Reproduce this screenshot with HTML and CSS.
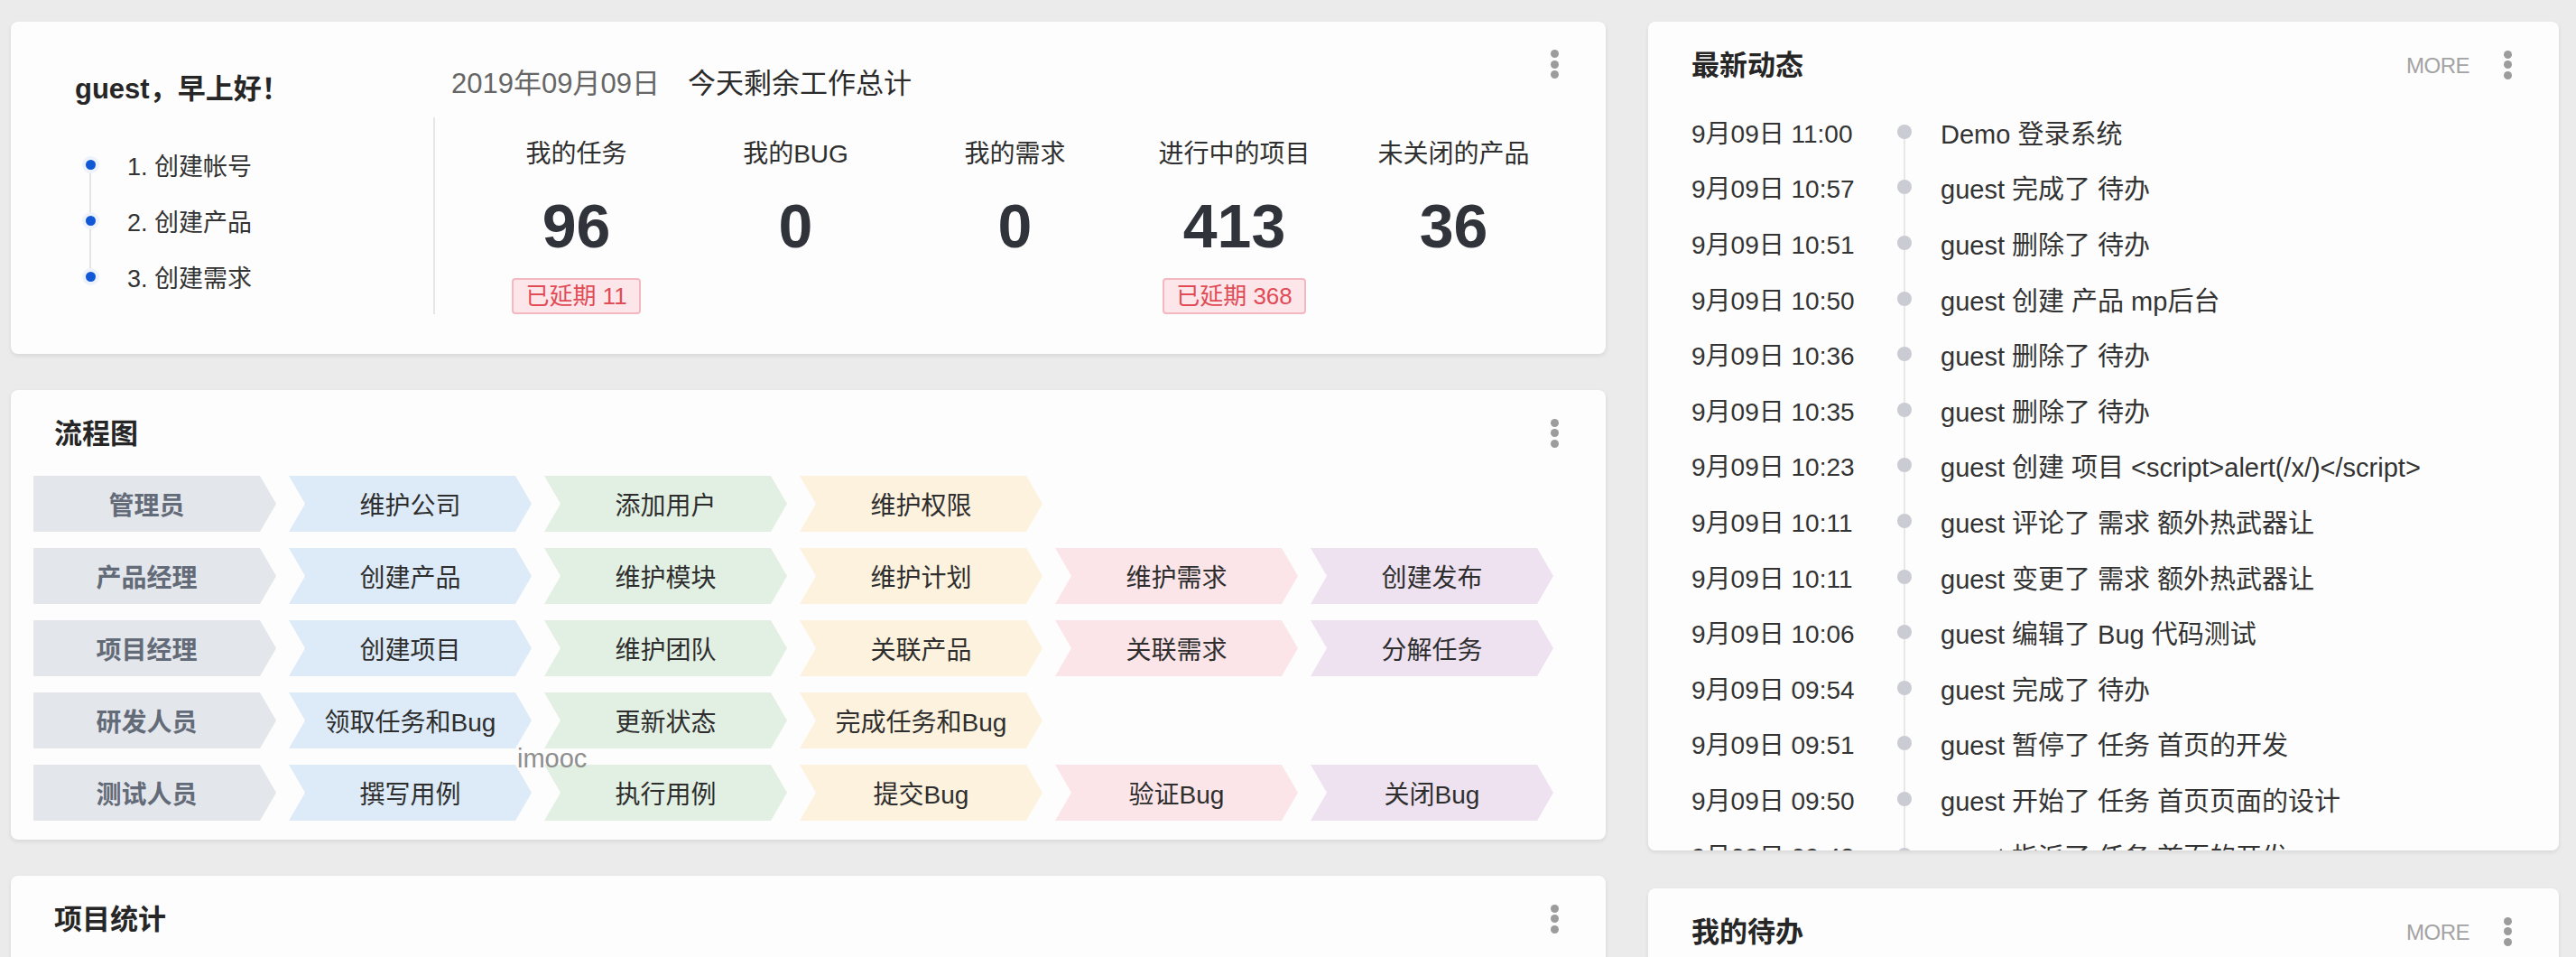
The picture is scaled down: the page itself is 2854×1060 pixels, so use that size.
FILE: index.html
```html
<!DOCTYPE html>
<html lang="zh-CN">
<head>
<meta charset="utf-8">
<title>Dashboard</title>
<link rel="stylesheet" href="styles.css">
</head>
<body>
<div class="dashboard">
  <div class="col col-left">
    <section class="card card-welcome">
      <div class="welcome-title">guest，早上好！</div>
      <div class="date-line"><span class="date">2019年09月09日</span><span class="date-sub">今天剩余工作总计</span></div>
      <div class="kebab"><i></i><i></i><i></i></div>
      <ul class="steps">
        <li><span class="step-dot"></span><span class="step-text">1. 创建帐号</span></li>
        <li><span class="step-dot"></span><span class="step-text">2. 创建产品</span></li>
        <li><span class="step-dot"></span><span class="step-text">3. 创建需求</span></li>
      </ul>
      <div class="stats">
        <div class="stat"><div class="stat-label">我的任务</div><div class="stat-num">96</div><span class="badge">已延期 11</span></div>
        <div class="stat"><div class="stat-label">我的BUG</div><div class="stat-num">0</div></div>
        <div class="stat"><div class="stat-label">我的需求</div><div class="stat-num">0</div></div>
        <div class="stat"><div class="stat-label">进行中的项目</div><div class="stat-num">413</div><span class="badge">已延期 368</span></div>
        <div class="stat"><div class="stat-label">未关闭的产品</div><div class="stat-num">36</div></div>
      </div>
    </section>

    <section class="card card-flow">
      <header class="card-head">
        <h2 class="card-title">流程图</h2>
        <div class="kebab"><i></i><i></i><i></i></div>
      </header>
      <div class="flow">
        <div class="flow-row">
          <div class="arrow a-role">管理员</div>
          <div class="arrow a-blue">维护公司</div>
          <div class="arrow a-green">添加用户</div>
          <div class="arrow a-yellow">维护权限</div>
        </div>
        <div class="flow-row">
          <div class="arrow a-role">产品经理</div>
          <div class="arrow a-blue">创建产品</div>
          <div class="arrow a-green">维护模块</div>
          <div class="arrow a-yellow">维护计划</div>
          <div class="arrow a-pink">维护需求</div>
          <div class="arrow a-purple">创建发布</div>
        </div>
        <div class="flow-row">
          <div class="arrow a-role">项目经理</div>
          <div class="arrow a-blue">创建项目</div>
          <div class="arrow a-green">维护团队</div>
          <div class="arrow a-yellow">关联产品</div>
          <div class="arrow a-pink">关联需求</div>
          <div class="arrow a-purple">分解任务</div>
        </div>
        <div class="flow-row">
          <div class="arrow a-role">研发人员</div>
          <div class="arrow a-blue">领取任务和Bug</div>
          <div class="arrow a-green">更新状态</div>
          <div class="arrow a-yellow">完成任务和Bug</div>
        </div>
        <div class="flow-row">
          <div class="arrow a-role">测试人员</div>
          <div class="arrow a-blue">撰写用例</div>
          <div class="arrow a-green">执行用例</div>
          <div class="arrow a-yellow">提交Bug</div>
          <div class="arrow a-pink">验证Bug</div>
          <div class="arrow a-purple">关闭Bug</div>
        </div>
      </div>
      <span class="watermark">imooc</span>
    </section>

    <section class="card card-stat">
      <header class="card-head">
        <h2 class="card-title">项目统计</h2>
        <div class="kebab"><i></i><i></i><i></i></div>
      </header>
    </section>
  </div>

  <div class="col col-right">
    <section class="card card-dynamic">
      <header class="card-head">
        <h2 class="card-title">最新动态</h2>
        <a class="more">MORE</a>
        <div class="kebab"><i></i><i></i><i></i></div>
      </header>
      <ul class="timeline">
        <li><span class="t-time">9月09日 11:00</span><span class="t-dot"></span><span class="t-text">Demo 登录系统</span></li>
        <li><span class="t-time">9月09日 10:57</span><span class="t-dot"></span><span class="t-text">guest 完成了 待办</span></li>
        <li><span class="t-time">9月09日 10:51</span><span class="t-dot"></span><span class="t-text">guest 删除了 待办</span></li>
        <li><span class="t-time">9月09日 10:50</span><span class="t-dot"></span><span class="t-text">guest 创建 产品 mp后台</span></li>
        <li><span class="t-time">9月09日 10:36</span><span class="t-dot"></span><span class="t-text">guest 删除了 待办</span></li>
        <li><span class="t-time">9月09日 10:35</span><span class="t-dot"></span><span class="t-text">guest 删除了 待办</span></li>
        <li><span class="t-time">9月09日 10:23</span><span class="t-dot"></span><span class="t-text">guest 创建 项目 &lt;script&gt;alert(/x/)&lt;/script&gt;</span></li>
        <li><span class="t-time">9月09日 10:11</span><span class="t-dot"></span><span class="t-text">guest 评论了 需求 额外热武器让</span></li>
        <li><span class="t-time">9月09日 10:11</span><span class="t-dot"></span><span class="t-text">guest 变更了 需求 额外热武器让</span></li>
        <li><span class="t-time">9月09日 10:06</span><span class="t-dot"></span><span class="t-text">guest 编辑了 Bug 代码测试</span></li>
        <li><span class="t-time">9月09日 09:54</span><span class="t-dot"></span><span class="t-text">guest 完成了 待办</span></li>
        <li><span class="t-time">9月09日 09:51</span><span class="t-dot"></span><span class="t-text">guest 暂停了 任务 首页的开发</span></li>
        <li><span class="t-time">9月09日 09:50</span><span class="t-dot"></span><span class="t-text">guest 开始了 任务 首页页面的设计</span></li>
        <li><span class="t-time">9月09日 09:48</span><span class="t-dot"></span><span class="t-text">guest 指派了 任务 首页的开发</span></li>
      </ul>
    </section>

    <section class="card card-todo">
      <header class="card-head">
        <h2 class="card-title">我的待办</h2>
        <a class="more">MORE</a>
        <div class="kebab"><i></i><i></i><i></i></div>
      </header>
    </section>
  </div>
</div>
</body>
</html>
```

FILE: styles.css
```css
* { box-sizing: border-box; }

html, body {
  margin: 0;
  height: 1060px;
  overflow: hidden;
  background: #ebebeb;
  font-family: "Liberation Sans", "Noto Sans CJK SC", sans-serif;
  color: #333;
}

ul { list-style: none; margin: 0; padding: 0; }
h2 { margin: 0; }

.dashboard {
  display: flex;
  align-items: flex-start;
  gap: 47px;
  padding: 24px 19px 0 12px;
}

.col {
  display: flex;
  flex-direction: column;
}
.col-left { width: 1767px; gap: 40px; }
.col-right { width: 1009px; gap: 42px; }

.card {
  background: #fdfdfd;
  border-radius: 8px;
  box-shadow: 0 2px 5px rgba(0, 0, 0, 0.09);
  overflow: hidden;
}

/* kebab menu */
.kebab {
  width: 24px;
  height: 34px;
  display: flex;
  flex-direction: column;
  align-items: center;
  justify-content: space-between;
  padding: 1px 0;
  flex: none;
}
.kebab i {
  display: block;
  width: 9px;
  height: 9px;
  border-radius: 50%;
  background: #9c9c9c;
}

/* card heading */
.card-head {
  display: flex;
  align-items: center;
  height: 95px;
  padding: 0 45px 4px 48px;
}
.card-title {
  font-size: 31px;
  font-weight: bold;
  color: #262626;
  flex: 1;
}
.more {
  font-size: 24px;
  color: #a3a3a3;
  margin-right: 30px;
  margin-top: 6px;
  letter-spacing: -0.5px;
}
.card-head .kebab { margin-top: 4px; }

/* ---------- welcome card ---------- */
.card-welcome {
  height: 368px;
  display: grid;
  grid-template-columns: 397px 1fr auto;
  grid-template-rows: 106px 218px;
  padding: 0 45px 0 71px;
}
.welcome-title {
  grid-column: 1;
  grid-row: 1;
  padding-top: 52px;
  line-height: 46px;
  font-size: 31px;
  font-weight: bold;
  color: #262626;
}
.date-line {
  grid-column: 2;
  grid-row: 1;
  padding: 46px 0 0 20px;
  line-height: 46px;
  font-size: 31px;
  white-space: nowrap;
}
.date { color: #666; margin-right: 31px; }
.date-sub { color: #2b2b2b; }
.card-welcome .kebab {
  grid-column: 3;
  grid-row: 1;
  align-self: start;
  margin-top: 30px;
}

.steps {
  grid-column: 1;
  grid-row: 2;
  padding-top: 21px;
}
.steps li {
  display: flex;
  align-items: center;
  height: 62px;
}
.step-dot {
  width: 34px;
  height: 100%;
  display: flex;
  align-items: center;
  justify-content: center;
  background: linear-gradient(#e4e4e4, #e4e4e4) no-repeat center / 2px 100%;
}
.steps li:first-child .step-dot { background-position: center bottom; background-size: 2px 50%; }
.steps li:last-child .step-dot { background-position: center top; background-size: 2px 50%; }
.step-dot::before {
  content: "";
  width: 11px;
  height: 11px;
  border-radius: 50%;
  background: #1158d6;
  box-shadow: 0 0 0 4px #eef2fa;
}
.step-text {
  padding-left: 24px;
  font-size: 27px;
  color: #333;
}

.stats {
  grid-column: 2 / 4;
  grid-row: 2;
  border-left: 2px solid #e6e6e6;
  padding-left: 35px;
  display: grid;
  grid-template-columns: repeat(5, 243px);
  align-items: start;
}
.stat {
  display: flex;
  flex-direction: column;
  align-items: center;
  padding-top: 21px;
}
.stat-label {
  font-size: 28px;
  line-height: 40px;
  color: #2f2f2f;
}
.stat-num {
  margin-top: 21px;
  font-size: 68px;
  line-height: 76px;
  font-weight: bold;
  color: #30333a;
}
.badge {
  margin-top: 20px;
  height: 40px;
  line-height: 36px;
  padding: 0 13px;
  font-size: 26px;
  color: #e04b56;
  background: #fde6ea;
  border: 2px solid #f5b8c0;
  border-radius: 4px;
}

/* ---------- flow card ---------- */
.card-flow {
  height: 498px;
  position: relative;
}
.flow {
  padding: 0 0 0 25px;
  display: flex;
  flex-direction: column;
  gap: 18px;
}
.flow-row {
  display: flex;
  gap: 14px;
}
.arrow {
  width: 269px;
  height: 62px;
  display: flex;
  align-items: center;
  justify-content: center;
  font-size: 28px;
  color: #2e2e2e;
  clip-path: polygon(0 0, calc(100% - 18px) 0, 100% 50%, calc(100% - 18px) 100%, 0 100%, 18px 50%);
  white-space: nowrap;
}
.a-role {
  clip-path: polygon(0 0, calc(100% - 18px) 0, 100% 50%, calc(100% - 18px) 100%, 0 100%);
  background: #e3e6eb;
  color: #646b78;
  font-weight: bold;
  padding-right: 18px;
}
.a-blue { background: #ddebf8; }
.a-green { background: #e2f0e3; }
.a-yellow { background: #fdf2dd; }
.a-pink { background: #fce5e9; }
.a-purple { background: #eee2f1; }

.watermark {
  position: absolute;
  left: 561px;
  top: 394px;
  font-size: 29px;
  line-height: 1;
  color: #8e8e8e;
}

/* ---------- project stat card ---------- */
.card-stat { height: 300px; }

/* ---------- dynamic card ---------- */
.card-dynamic { height: 918px; }
.timeline {
  padding: 0 0 0 48px;
  margin-top: -4px;
}
.timeline li {
  display: grid;
  grid-template-columns: 220px 32px 1fr;
  align-items: center;
  height: 61.6px;
  font-size: 28px;
  white-space: nowrap;
}
.t-time { color: #333; }
.t-dot {
  height: 100%;
  display: flex;
  align-items: center;
  justify-content: center;
  background: linear-gradient(#e8e8e8, #e8e8e8) no-repeat center / 2px 100%;
}
.timeline li:first-child .t-dot { background-position: center bottom; background-size: 2px 50%; }
.t-dot::before {
  content: "";
  width: 16px;
  height: 16px;
  border-radius: 50%;
  background: #cbcbd3;
}
.t-text {
  padding-left: 24px;
  font-size: 29px;
  color: #333;
}

.card-todo { height: 300px; }
```
